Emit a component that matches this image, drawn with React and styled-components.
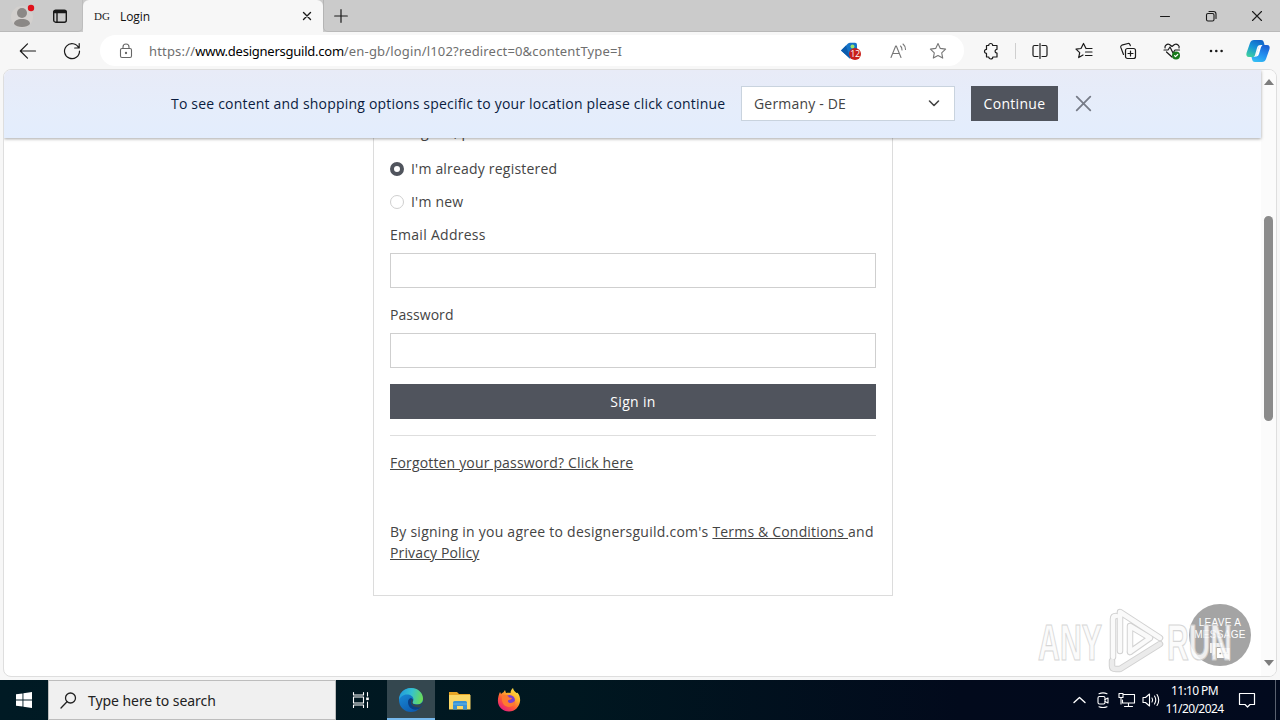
import { useState } from 'react';
import styled, { createGlobalStyle, css } from 'styled-components';

const GlobalStyle = createGlobalStyle`
  * {
    box-sizing: border-box;
  }

  body {
    margin: 0;
    overflow: hidden;
    font-family: 'Open Sans', 'Noto Sans', sans-serif;
  }
`;

const Screen = styled.div`
  display: flex;
  flex-direction: column;
  width: 1280px;
  height: 720px;
  background: #f7f7f7;
`;

/* ---------- browser ---------- */

const TabStrip = styled.div`
  display: flex;
  height: 32px;
  background: #cbcbcb;
`;

const TabTools = styled.div`
  display: flex;
  align-items: center;
  gap: 17px;
  width: 83px;
  padding-left: 12px;
  border-bottom: 1px solid #b9b9b9;
  border-right: 1px solid #bdbdbd;
  border-bottom-right-radius: 5px;
`;

const Tab = styled.div`
  display: flex;
  align-items: center;
  width: 240px;
  padding: 0 9px 0 11px;
  background: #f7f7f7;
  border-radius: 6px 6px 0 0;
  font-size: 12px;
  color: #111;
`;

const Favicon = styled.span`
  width: 26px;
  font-family: 'Liberation Serif', serif;
  font-size: 11px;
  color: #222;
`;

const TabTitle = styled.span`
  flex: 1;
  letter-spacing: -0.1px;
`;

const StripRest = styled.div`
  display: flex;
  flex: 1;
  align-items: center;
  justify-content: space-between;
  padding: 0 17px 0 10px;
  border-left: 1px solid #b4b4b4;
  border-bottom: 1px solid #b9b9b9;
  border-bottom-left-radius: 5px;
`;

const WindowButtons = styled.div`
  display: flex;
  align-items: center;
  gap: 34px;
`;

const Toolbar = styled.div`
  display: flex;
  align-items: center;
  height: 37px;
  padding: 0 10px 0 19px;
`;

const NavButtons = styled.div`
  display: flex;
  flex-shrink: 0;
  gap: 26px;
  width: 81px;
`;

const AddressBar = styled.div`
  display: flex;
  flex-shrink: 0;
  align-items: center;
  width: 864px;
  height: 31px;
  padding: 0 17px 0 18px;
  background: #fff;
  border-radius: 16px;
`;

const Url = styled.span`
  flex: 1;
  margin-left: 15px;
  font-family: 'Noto Sans', sans-serif;
  font-size: 13px;
  letter-spacing: 0.17px;
  color: #6f6f6f;
  white-space: nowrap;

  b {
    font-weight: 400;
    letter-spacing: -0.24px;
    color: #000;
  }
`;

const AddressIcons = styled.div`
  display: flex;
  align-items: center;
  gap: 26px;
`;

const Coupon = styled.div`
  position: relative;
  display: flex;
`;

const CouponCount = styled.span`
  position: absolute;
  left: 9px;
  top: 6px;
  width: 12px;
  height: 12px;
  border-radius: 50%;
  background: #c8201c;
  color: #fff;
  font-size: 9px;
  line-height: 12px;
  letter-spacing: -0.4px;
  text-align: center;
`;

const ToolbarIcons = styled.div`
  display: flex;
  flex: 1;
  align-items: center;
  gap: 26px;
  padding-left: 18px;
`;

const ToolbarDivider = styled.span`
  width: 1px;
  height: 16px;
  margin: 0 -11px;
  background: #cfcfcf;
`;

const CopilotButton = styled.span`
  display: flex;
  margin-left: -5px;
`;

const Body = styled.div`
  display: flex;
  flex: 1;
  min-height: 0;
  padding: 0 3px 3px;
`;

const Frame = styled.div`
  position: relative;
  display: flex;
  flex: 1;
  overflow: hidden;
  background: #fff;
  border: 1px solid #dedede;
  border-radius: 8px;
`;

const Page = styled.main`
  display: flex;
  flex: 1;
  justify-content: center;
  align-items: flex-start;
  padding-left: 1px;
  font-size: 14px;
  line-height: 21px;
  color: #444;
`;

const ScrollTrack = styled.div`
  display: flex;
  flex-direction: column;
  align-items: center;
  width: 15px;
  padding: 9px 0 10px;
  background: #fbfbfb;
`;

const ScrollArrow = styled.span`
  width: 0;
  height: 0;
  border: 5px solid transparent;
  border-top-width: 0;
  border-bottom: 6px solid #7d7d7d;
  ${(props) =>
    props.$down &&
    css`
      transform: rotate(180deg);
    `}
`;

const ScrollThumb = styled.div`
  width: 9px;
  height: 205px;
  margin: 131px 0 auto;
  border-radius: 5px;
  background: #8b8b8b;
`;

/* ---------- page ---------- */

/* the banner stays on top of the scrolled page */
const Banner = styled.div`
  position: absolute;
  top: 0;
  left: 0;
  right: 15px;
  display: flex;
  align-items: center;
  height: 68px;
  padding: 0 0 2px 167px;
  background: linear-gradient(#e8ebf7, #e5edfb 60%, #e3edfd);
  box-shadow: 0 1px 3px rgba(0, 0, 0, 0.35);
  font-size: 14px;
  color: #0a1c3f;
`;

const BannerText = styled.span`
  width: 570px;
  letter-spacing: 0.2px;
  white-space: nowrap;
`;

const CountrySelect = styled.div`
  display: flex;
  align-items: center;
  justify-content: space-between;
  width: 214px;
  height: 35px;
  margin-right: 16px;
  padding: 0 14px 0 12px;
  background: #fff;
  border: 1px solid #c9d3de;
  letter-spacing: 0.18px;
  color: #444;
`;

const Button = styled.button`
  display: block;
  width: ${(props) => props.$width || '100%'};
  height: 35px;
  padding: 0;
  border: none;
  background: #50545d;
  color: #fff;
  font-family: inherit;
  font-size: 14px;
  letter-spacing: 0.3px;
`;

const CloseButton = styled.span`
  display: flex;
  margin-left: 18px;
`;

const Card = styled.form`
  width: 520px;
  height: 526px;
  padding: 51px 16px 0;
  border: 1px solid #dcdcdc;
  border-top: none;
  letter-spacing: 0.2px;
`;

const Intro = styled.p`
  margin: 0 0 16px;
`;

const RadioRow = styled.div`
  display: flex;
  align-items: center;
  gap: 7px;
  margin-bottom: 12px;
`;

const Radio = styled.span`
  width: 14px;
  height: 14px;
  margin-top: 1px;
  border-radius: 50%;
  border: ${(props) => (props.$checked ? '4.5px solid #50545d' : '1.5px solid #cfcfcf')};
`;

const Label = styled.label`
  display: block;
  margin-bottom: 8px;
  letter-spacing: ${(props) => props.$track};
`;

const Input = styled.input`
  display: block;
  width: 100%;
  height: 35px;
  margin-bottom: 16px;
  padding: 0 12px;
  border: 1px solid #cfcfcf;
  background: #fff;
  outline: none;
`;

const Rule = styled.hr`
  height: 1px;
  margin: 16px 0;
  border: none;
  background: #dedede;
`;

const Link = styled.a`
  color: #444;
  letter-spacing: ${(props) => props.$track || 'inherit'};
  text-decoration: underline;
  white-space: pre;
`;

const Terms = styled.p`
  margin: 48px 0 0;
  letter-spacing: 0.25px;
  white-space: nowrap;
`;

const Watermark = styled.div`
  position: absolute;
  right: 38px;
  bottom: 3px;
  display: flex;
`;

const ChatButton = styled.div`
  position: absolute;
  right: 25px;
  bottom: 10px;
  display: flex;
  flex-direction: column;
  align-items: center;
  width: 62px;
  height: 62px;
  padding-top: 13px;
  border-radius: 50%;
  background: rgba(125, 125, 125, 0.7);
  color: #fff;
  font-family: 'Liberation Sans', sans-serif;
  font-size: 10px;
  line-height: 12px;
  letter-spacing: 0.3px;
  white-space: nowrap;
`;

/* ---------- taskbar ---------- */

const Taskbar = styled.div`
  display: flex;
  height: 40px;
  background: linear-gradient(90deg, #001a24 0%, #001720 45%, #020a1c 75%, #020a1e 100%);
  color: #fff;
`;

const TaskButton = styled.div`
  display: flex;
  align-items: center;
  justify-content: center;
  width: ${(props) => props.$width || '49px'};
  border-bottom: 2px solid transparent;
  padding-top: 2px;
  ${(props) =>
    props.$active &&
    css`
      background: #34474f;
      border-bottom-color: #76b9ed;
    `}
`;

const SearchBox = styled.div`
  display: flex;
  align-items: center;
  gap: 11px;
  width: 288px;
  padding-left: 11px;
  background: #f0f0f0;
  border: 1px solid #bdbdbd;
  color: #222;
  font-family: 'Noto Sans', sans-serif;
  font-size: 14px;
  letter-spacing: -0.06px;
`;

const Tray = styled.div`
  display: flex;
  align-items: center;
  margin-left: auto;
`;

const TrayIcons = styled.div`
  display: flex;
  align-items: center;
  gap: 7px;
`;

const Clock = styled.div`
  width: 68px;
  margin-right: 9px;
  padding-left: 1px;
  font-family: 'Noto Sans', sans-serif;
  font-size: 12px;
  line-height: 18px;
  letter-spacing: -0.6px;
  text-align: center;
`;

const ShowDesktop = styled.span`
  width: 5px;
  height: 40px;
  margin-left: 18px;
  border-left: 1px solid #5a6170;
`;

const Svg = ({ w = 16, h, box, stroke = '#1a1a1a', sw = 1.2, children }) => (
  <svg
    width={w}
    height={h || w}
    viewBox={box || `0 0 ${w} ${h || w}`}
    fill='none'
    stroke={stroke}
    strokeWidth={sw}
    strokeLinecap='round'
    strokeLinejoin='round'
    overflow='visible'
  >
    {children}
  </svg>
);

const ProfileIcon = () => (
  <Svg w={24} stroke='none'>
    <circle cx='10' cy='13' r='11' fill='#d3d0ce' />
    <circle cx='10' cy='9' r='5' fill='#8b8886' />
    <path d='M2 20c0-3.500 3.500-5 8-5s8 1.500 8 5c-1.500 2-4.500 3-8 3s-6.500-1-8-3z' fill='#8b8886' />
    <circle cx='19' cy='4' r='3.200' fill='#e0111b' />
  </Svg>
);

const TabsIcon = () => (
  <Svg w={14} sw={1.4}>
    <rect x='.7' y='1.200' width='12.600' height='12' rx='2' />
    <path d='M1.500 3h11' strokeWidth='2.600' />
    <path d='M4 4v9' />
  </Svg>
);

const XIcon = ({ w = 8, stroke, sw = 1.3 }) => (
  <Svg w={w} stroke={stroke} sw={sw}>
    <path d={`M.7.7l${w - 1.4} ${w - 1.4}M${w - 0.7}.7L.7 ${w - 0.7}`} />
  </Svg>
);

const CouponIcon = () => (
  <Svg w={19} h={17} stroke='none'>
    <path d='M1 8.500L8 1.500Q9 .8 10 .8h5q2 0 2 2v6q0 1-1 2l-6 6z' fill='#1473c8' />
    <path d='M1 8.500l5-5 4 13z' fill='#0b5cad' />
    <circle cx='12.500' cy='4.500' r='2' fill='#9be36a' />
  </Svg>
);

const CopilotIcon = () => (
  <svg width='24' height='24' viewBox='0 0 24 24'>
    <defs>
      <linearGradient id='cpA' x1='0.7' y1='0' x2='0.2' y2='1'>
        <stop offset='0' stopColor='#1263c8' />
        <stop offset='0.45' stopColor='#1593d8' />
        <stop offset='1' stopColor='#3fd0a0' />
      </linearGradient>
      <linearGradient id='cpB' x1='0.6' y1='0' x2='0.2' y2='1'>
        <stop offset='0' stopColor='#1c62d4' />
        <stop offset='0.5' stopColor='#2390f0' />
        <stop offset='1' stopColor='#35c0f4' />
      </linearGradient>
    </defs>
    <path d='M8 1h7c2 0 2.500 1 3 3l.5 2h-4c-2 0-3 1-3.500 3l-2 7c-.5 1.500-1 2-2.500 2H3c-2.500 0-3-2-2.500-4L4 4c.7-2 2-3 4-3z' fill='url(#cpA)' />
    <path d='M16 23H9c-2 0-2.500-1-3-3l-.5-2h2c2 0 3-1 3.500-3l2-7c.5-1.500 1.500-2 3-2h5c2.500 0 3 2 2.500 4L20 20c-.7 2-2 3-4 3z' fill='url(#cpB)' />
    <path d='M10 17l3-9.500q.5-1.500 2-1.500h1.500q-1.200 1-1.600 2.500L13 15q-.6 2-2.500 2.500H8.500z' fill='#fff' />
  </svg>
);

const WindowsIcon = () => (
  <Svg w={16} stroke='none'>
    <path d='M0 2.300L6.500 1.400v6.100H0zM7.400 1.300L16 0v7.500H7.400zM0 8.400h6.500v6.200L0 13.700zM7.400 8.400H16V16l-8.600-1.300z' fill='#fff' />
  </Svg>
);

const EdgeIcon = () => (
  <svg width='26' height='26' viewBox='0 0 26 26'>
    <defs>
      <linearGradient id='edgeTop' x1='0' y1='0.3' x2='1' y2='0.5'>
        <stop offset='0' stopColor='#2099dc' />
        <stop offset='0.5' stopColor='#35c1d0' />
        <stop offset='1' stopColor='#6bdc55' />
      </linearGradient>
      <linearGradient id='edgeLow' x1='0' y1='0' x2='0.6' y2='1'>
        <stop offset='0' stopColor='#1b93dc' />
        <stop offset='1' stopColor='#0d5bb0' />
      </linearGradient>
    </defs>
    <circle cx='13' cy='13' r='12' fill='url(#edgeLow)' />
    <path d='M1 13C1 6 6 1 13 1s12 5 12 10.500c0 4-3 6-6 6-3 0-4.500-1-4.500-2 0-.7 1-1 1-3C15.500 9.500 12.500 7.500 9 7.500c-4 0-7 2.500-8 5.500z' fill='url(#edgeTop)' />
    <path d='M10 15c0-2 1-3.500 3-4 1.500.5 2.300 1.800 1.500 3.300-.8 1.700.5 3.500 4.500 3.500 2 0 3.500-.6 4.500-1.300l1 .5c-.8 2-1.500 3-3 4.500-1 .7-2.500 1.200-4 1.200-4.500 0-7.500-3.500-7.500-7.700z' fill='#0a3f86' />
    <path d='M14.500 12c.8 1 .5 2 0 2.800-.7 1.500.8 3 4.500 3 3 0 4.800-1.200 5.800-3l.2 2-3 3.500c-4 .8-9.500-1-9-5.500.1-1.200.5-2.200 1.500-2.800z' fill='#34474f' />
  </svg>
);

const FolderIcon = () => (
  <svg width='22' height='19' viewBox='0 0 22 19'>
    <path d='M0 1h8l2 2h11v15H0z' fill='#e8a524' />
    <path d='M0 4h21.500v14.500H0z' fill='#fbd766' />
    <path d='M4 18.500v-7q0-1.500 1.500-1.500h11q1.500 0 1.500 1.500v7h-4V15H8v3.500z' fill='#3b93d4' />
    <path d='M4 13h14' stroke='#63b4e8' />
  </svg>
);

const FirefoxIcon = () => (
  <svg width='24' height='24' viewBox='0 0 24 24'>
    <defs>
      <linearGradient id='fxBody' x1='0.9' y1='0' x2='0.2' y2='1'>
        <stop offset='0' stopColor='#fff14f' />
        <stop offset='0.35' stopColor='#ffb32b' />
        <stop offset='0.65' stopColor='#ff5a36' />
        <stop offset='1' stopColor='#e31587' />
      </linearGradient>
    </defs>
    <path d='M3 4c.5.6.8 1.500 1 2 .7-1 1.600-1.500 2.500-1.800L8 2l1 3c1.500-.5 3-.5 4.500 0C13.500 3 14.500 1 16 0c.5 2.500 2 3.500 3.500 5l1-.2c2 2.200 2.800 5 2.600 8C22.500 19 18 23.500 12 23.500S1 19 .9 13C.8 9.500 1.800 6.500 3 4z' fill='url(#fxBody)' />
    <circle cx='12.500' cy='12.500' r='5.500' fill='#7b3fd1' />
    <path d='M5 8c3-2 6-.5 7 1.500l3 .5c-.5 1.500-2 1.700-3.300 2C10 12.500 11 15 13.500 15c2 0 3.500-1 4.500-2.500.5 4-2.500 6.500-6 6.500-4.500 0-8-4-7-11z' fill='#ff7a2f' />
  </svg>
);

const WatermarkArt = () => (
  <svg width='200' height='66' viewBox='0 0 200 66' overflow='visible'>
    <g
      fill='#fbfbfb'
      stroke='#d0d0d0'
      strokeWidth='1.200'
      fontFamily="'Liberation Sans', sans-serif"
      fontSize='50'
      fontWeight='700'
      opacity='0.85'
    >
      <text x='0' y='53' textLength='64' lengthAdjust='spacingAndGlyphs'>
        ANY
      </text>
      <text x='129' y='53' textLength='65' lengthAdjust='spacingAndGlyphs'>
        RUN
      </text>
    </g>
    <g fill='none' strokeLinejoin='round' strokeLinecap='round'>
      <path d='M82 44V5l40 26M75 50V12q0-3 3-3M74 54v5q0 3 4 3h4l40-25M92 45V19l20 12-20 14' stroke='#d2d2d2' strokeWidth='6.500' />
      <path d='M82 44V5l40 26M75 50V12q0-3 3-3M92 45V19l20 12-20 14' stroke='#fafafa' strokeWidth='4.500' />
      <path d='M74 54v5q0 3 4 3h4l40-25' stroke='#ebebeb' strokeWidth='4.500' />
    </g>
  </svg>
);

const Browser = () => (
  <>
    <TabStrip>
      <TabTools>
        <ProfileIcon />
        <TabsIcon />
      </TabTools>
      <Tab>
        <Favicon>DG</Favicon>
        <TabTitle>Login</TabTitle>
        <Svg w={14} sw={1.4}>
          <path d='M3.500 3.500l7 7M10.500 3.500l-7 7' />
        </Svg>
      </Tab>
      <StripRest>
        <Svg w={14}>
          <path d='M7 .7v12.600M.7 7h12.600' />
        </Svg>
        <WindowButtons>
          <Svg w={12} sw={1}>
            <path d='M1.500 6.500h9' />
          </Svg>
          <Svg w={12} sw={1.1}>
            <rect x='1.500' y='3.500' width='7.500' height='7.500' rx='1.500' />
            <path d='M4 1.500h4.500q2.500 0 2.500 2.500v4.500' />
          </Svg>
          <Svg w={12} sw={1.1}>
            <path d='M1.500 1.500l9 9M10.500 1.500l-9 9' />
          </Svg>
        </WindowButtons>
      </StripRest>
    </TabStrip>
    <Toolbar>
      <NavButtons>
        <Svg w={18}>
          <path d='M16.500 9H1.500M8.500 1.800L1.300 9l7.200 7.200' />
        </Svg>
        <Svg w={18}>
          <path d='M15.800 6A7.500 7.500 0 1 0 16.500 9M16.200 1.500V6h-4.500' />
        </Svg>
      </NavButtons>
      <AddressBar>
        <Svg w={16} stroke='#666' sw={1.1}>
          <rect x='2.500' y='5.500' width='11' height='9' rx='1.500' />
          <path d='M5 5.500V4a3 3 0 0 1 6 0v1.500' />
          <circle cx='8' cy='10' r='.6' fill='#666' />
        </Svg>
        <Url>
          https://<b>www.designersguild.com</b>/en-gb/login/l102?redirect=0&amp;contentType=I
        </Url>
        <AddressIcons>
          <Coupon>
            <CouponIcon />
            <CouponCount>12</CouponCount>
          </Coupon>
          <Svg w={18} box='-8 0 18 18' stroke='#777' sw={1.1}>
            <path d='M-2 15.500L2.700 4h.6L8 15.500M-.4 11.500h6.800M7.500 4q1.500 1.200 1.500 4M10 2q2.500 2 2.500 5.500' />
          </Svg>
          <Svg w={18} stroke='#777' sw={1.1}>
            <path d='M9 1.500l2.300 4.900 5.300.7-3.900 3.700 1 5.300L9 13.500l-4.700 2.600 1-5.300L1.400 7.100l5.300-.7z' />
          </Svg>
        </AddressIcons>
      </AddressBar>
      <ToolbarIcons>
        <Svg w={18}>
          <path d='M4.500 3.500h2.200a2 2 0 0 1 4 0H15v3.800a1.900 1.900 0 1 0 0 3.800V15h-4.200a2 2 0 0 1-4 0H4.500v-3.600a2 2 0 1 1 0-4z' />
        </Svg>
        <ToolbarDivider />
        <Svg w={18}>
          <path d='M7 3.500H3.500Q2 3.500 2 5v8q0 1.500 1.500 1.500H7M11 3.500h3.500Q16 3.500 16 5v8q0 1.500-1.500 1.500H11M9 1.500v15' />
        </Svg>
        <Svg w={18}>
          <path d='M11 6.500L8.500 1.500 6 6.500l-5 .6 3.700 3.500-1 5L8 13M11.500 6.500H17M10.500 10H17M10.500 13.500H17' />
        </Svg>
        <Svg w={18}>
          <rect x='6.500' y='6.500' width='10' height='10' rx='2' />
          <path d='M11.500 9v5M9 11.500h5M4.500 12.500L1.800 5.400q-.5-1.600 1-2.200L9 1.500q1.500-.3 2 1.200l.3 1' />
        </Svg>
        <Svg w={18}>
          <path d='M9 15L3.500 10M2 6C1.500 3.500 4 1.500 6.500 2.500L9 4.500l2.500-2C14 1.500 17 3.500 16 6M1 8h4l2-3 3 6 2-3h4.500' />
          <circle cx='13' cy='13.500' r='4' fill='#187a1b' stroke='none' />
          <path d='M11.500 13.700l1 1 2.200-2.200' stroke='#fff' />
        </Svg>
        <Svg w={18}>
          <g fill='#1a1a1a' stroke='none'>
            <circle cx='4' cy='9' r='1.300' />
            <circle cx='9.300' cy='9' r='1.300' />
            <circle cx='14.600' cy='9' r='1.300' />
          </g>
        </Svg>
        <CopilotButton>
          <CopilotIcon />
        </CopilotButton>
      </ToolbarIcons>
    </Toolbar>
  </>
);

const LoginForm = () => {
  const [registered, setRegistered] = useState(true);

  return (
    <Card onSubmit={(e) => e.preventDefault()}>
      <Intro>To sign in, please</Intro>
      <RadioRow onClick={() => setRegistered(true)}>
        <Radio $checked={registered} />
        I'm already registered
      </RadioRow>
      <RadioRow onClick={() => setRegistered(false)}>
        <Radio $checked={!registered} />
        I'm new
      </RadioRow>
      <Label $track='0.28px'>Email Address</Label>
      <Input type='email' />
      <Label $track='0.05px'>Password</Label>
      <Input type='password' />
      <Button type='submit'>Sign in</Button>
      <Rule />
      <Link $track='0.17px'>Forgotten your password? Click here</Link>
      <Terms>
        By signing in you agree to designersguild.com's <Link $track='0.18px'>Terms &amp; Conditions </Link>and
        <br />
        <Link $track='0.14px'>Privacy Policy</Link>
      </Terms>
    </Card>
  );
};

const App = () => {
  return (
    <Screen>
      <GlobalStyle />
      <Browser />
      <Body>
        <Frame>
          <Page>
            <LoginForm />
          </Page>
          <ScrollTrack>
            <ScrollArrow />
            <ScrollThumb />
            <ScrollArrow $down />
          </ScrollTrack>
          <Banner>
            <BannerText>
              To see content and shopping options specific to your location please click continue
            </BannerText>
            <CountrySelect>
              Germany - DE
              <Svg w={12} stroke='#444' sw={1.6}>
                <path d='M1.500 4L6 8.500 10.500 4' />
              </Svg>
            </CountrySelect>
            <Button $width='87px'>Continue</Button>
            <CloseButton>
              <XIcon w={15} stroke='#777c88' sw={1.8} />
            </CloseButton>
          </Banner>
          <ChatButton>
            <span>LEAVE A</span>
            <span>MESSAGE</span>
            <Svg w={22} h={18} stroke='none'>
              <path d='M1 2h12v4H6v7l-3 2v-3H1z' fill='#f0f0f0' />
              <path d='M8 7h13v13l-3-3H8z' fill='#fff' />
              <path d='M11 12.500h8' stroke='#999' strokeWidth='1.500' strokeDasharray='.5 3' />
            </Svg>
          </ChatButton>
          <Watermark>
            <WatermarkArt />
          </Watermark>
        </Frame>
      </Body>
      <Taskbar>
        <TaskButton $width='48px'>
          <WindowsIcon />
        </TaskButton>
        <SearchBox>
          <Svg w={17} stroke='#222' sw={1.3}>
            <circle cx='10.500' cy='6' r='5' />
            <path d='M7 9.800L1 16' />
          </Svg>
          Type here to search
        </SearchBox>
        <TaskButton $width='51px'>
          <Svg w={18} h={16} stroke='#fff' sw={1.1}>
            <path d='M.5.500V3h10V.500M.5 15.500V13h10v2.500M.5 5h10v6H.5zM14.500.500V4M14.500 10v5.500' />
            <path d='M13.200 5.500h2.600v2.600h-2.600z' fill='#fff' stroke='none' />
          </Svg>
        </TaskButton>
        <TaskButton $active $width='48px'>
          <EdgeIcon />
        </TaskButton>
        <TaskButton>
          <FolderIcon />
        </TaskButton>
        <TaskButton>
          <FirefoxIcon />
        </TaskButton>
        <Tray>
          <TrayIcons>
            <Svg w={15} h={14} stroke='#fff' sw={1.4}>
              <path d='M2 9.500l5.500-5 5.500 5' />
            </Svg>
            <Svg w={16} stroke='#fff' sw={1.1}>
              <rect x='4' y='4.500' width='7' height='7.500' rx='1.500' />
              <path d='M11 7.500L14 6v5l-3-1.500M5 1.700q4-1.700 8 0M5 14.700q4 1.700 8 0' />
            </Svg>
            <Svg w={18} h={16} stroke='#fff' sw={1.1}>
              <path d='M7 2.500h10.500v8.500h-12V8M11.500 11v3.500M7.500 14.500h8M2 1.500h4v4H2zM4 5.500v6.500' />
            </Svg>
            <Svg w={18} h={16} stroke='#fff' sw={1.1}>
              <path d='M1 5.500h2.500L7.500 2v12L3.500 10.500H1zM10 6q1.300 2 0 4M12.500 4q2.500 4 0 8M15 2.500q3.500 5.500 0 11' />
            </Svg>
          </TrayIcons>
          <Clock>
            11:10 PM
            <br />
            11/20/2024
          </Clock>
          <Svg w={20} stroke='#fff' sw={1.2}>
            <path d='M2.500 3.500h15v11h-4.500L10.500 17 8 14.500H2.500z' />
          </Svg>
          <ShowDesktop />
        </Tray>
      </Taskbar>
    </Screen>
  );
};

export default App;
